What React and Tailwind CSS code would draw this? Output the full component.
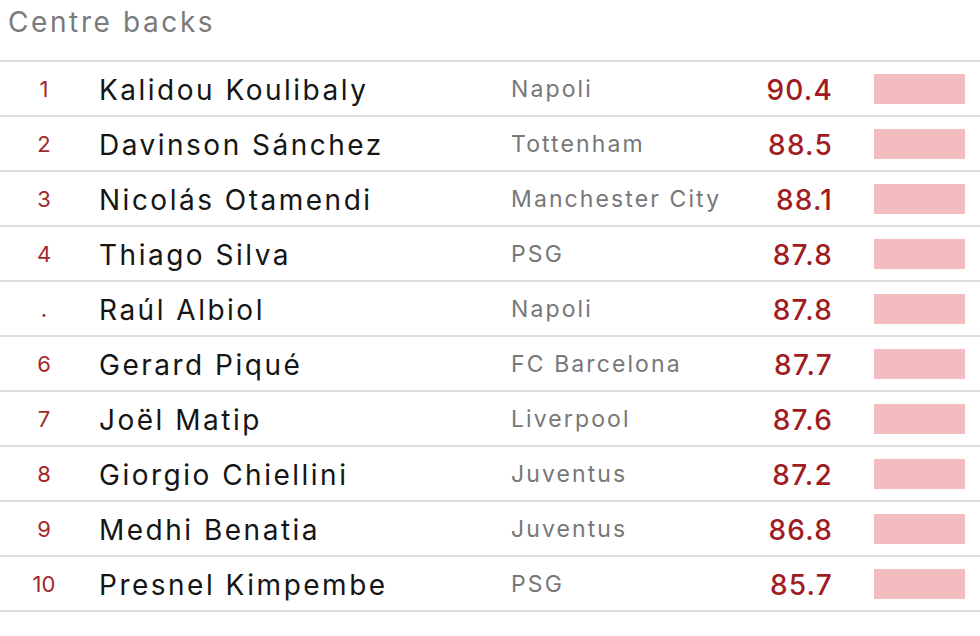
const players = [
  { rank: '1', name: 'Kalidou Koulibaly', club: 'Napoli', score: '90.4' },
  { rank: '2', name: 'Davinson Sánchez', club: 'Tottenham', score: '88.5' },
  { rank: '3', name: 'Nicolás Otamendi', club: 'Manchester City', score: '88.1' },
  { rank: '4', name: 'Thiago Silva', club: 'PSG', score: '87.8' },
  { rank: '.', name: 'Raúl Albiol', club: 'Napoli', score: '87.8' },
  { rank: '6', name: 'Gerard Piqué', club: 'FC Barcelona', score: '87.7' },
  { rank: '7', name: 'Joël Matip', club: 'Liverpool', score: '87.6' },
  { rank: '8', name: 'Giorgio Chiellini', club: 'Juventus', score: '87.2' },
  { rank: '9', name: 'Medhi Benatia', club: 'Juventus', score: '86.8' },
  { rank: '10', name: 'Presnel Kimpembe', club: 'PSG', score: '85.7' },
];

export default function App() {
  return (
    <div className="w-[980px] h-[636px] bg-white font-['Inter',sans-serif] overflow-hidden">
      {/* Titre */}
      <h2 className="pl-[8px] h-[60px] text-[28px] leading-[44px] text-[#7a7a7a] tracking-[2.6px]">
        Centre backs
      </h2>

      <div className="border-t-2 border-[#dedede]">
        {players.map((p) => (
          <div
            key={p.name}
            className="flex items-center h-[55px] pt-[2px] border-b-2 border-[#dedede]"
          >
            <div className="w-[88px] text-center text-[22px] text-[#a3282b]">{p.rank}</div>
            <div className="w-[11px]" />
            <div className="w-[412px] text-[28px] text-[#151515] tracking-[2.5px]">{p.name}</div>
            <div className="w-[220px] text-[23px] text-[#777] tracking-[2.1px]">{p.club}</div>
            <div className="w-[102px] text-right text-[28px] font-medium text-[#a01c22] tracking-[1.2px]">{p.score}</div>
            <div className="ml-[41px] w-[91px] h-[30px] -mt-[2px] bg-[#f3bcbe]" />
          </div>
        ))}
      </div>
    </div>
  );
}
